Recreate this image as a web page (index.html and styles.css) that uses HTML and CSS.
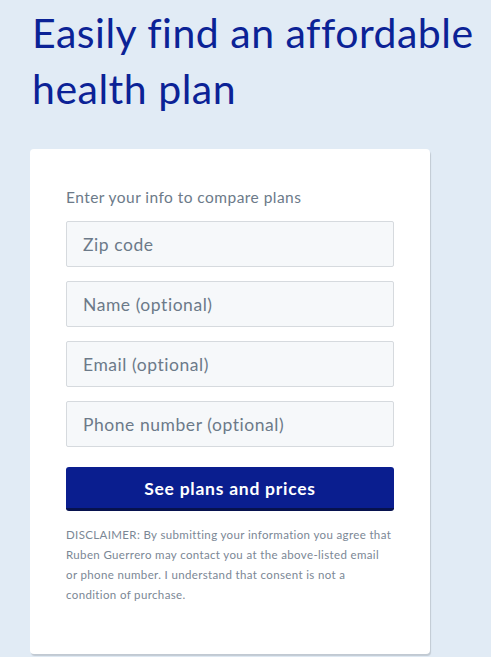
FILE: index.html
```html
<!DOCTYPE html>
<html lang="en">
<head>
<meta charset="utf-8">
<link rel="stylesheet" href="styles.css">
</head>
<body>
<main class="page">
  <h1 class="title">Easily find an affordable health plan</h1>
  <section class="card">
    <p class="intro">Enter your info to compare plans</p>
    <form class="form">
      <input class="field" type="text" placeholder="Zip code">
      <input class="field" type="text" placeholder="Name (optional)">
      <input class="field" type="text" placeholder="Email (optional)">
      <input class="field" type="text" placeholder="Phone number (optional)">
      <button class="submit" type="button">See plans and prices</button>
    </form>
    <p class="disclaimer">DISCLAIMER: By submitting your information you agree that Ruben Guerrero may contact you at the above-listed email or phone number. I understand that consent is not a condition of purchase.</p>
  </section>
</main>
</body>
</html>
```

FILE: styles.css
```css
* { box-sizing: border-box; }
html, body { margin: 0; padding: 0; }
body {
  background: #e1ebf5;
  font-family: "Lato", "Open Sans", sans-serif;
  width: 491px;
  height: 657px;
  overflow: hidden;
}
.page {
  padding: 5px 0 0 30px;
}
.title {
  margin: 0 0 0 2px;
  font-weight: 400;
  font-size: 41px;
  line-height: 56px;
  color: #0b2296;
  width: 455px;
  letter-spacing: 0.5px;
}
.card {
  margin-top: 32px;
  width: 400px;
  height: 505px;
  background: #fff;
  border-radius: 4px;
  box-shadow: 1px 2px 1px rgba(0,0,0,0.14);
  padding: 38px 36px 0 36px;
}
.intro {
  margin: 0 0 14px 0;
  font-size: 15.5px;
  line-height: 20px;
  letter-spacing: 0.45px;
  color: #6c7a89;
}
.form {
  display: flex;
  flex-direction: column;
  gap: 14px;
}
.field {
  width: 328px;
  height: 46px;
  background: #f6f8fa;
  border: 1px solid #d6dade;
  border-radius: 2px;
  padding: 0 16px;
  font-family: inherit;
  font-size: 17.5px;
  letter-spacing: 0.55px;
  color: #6c7a89;
  outline: none;
}
.field::placeholder { color: #6c7a89; }
.submit {
  margin-top: 6px;
  width: 328px;
  height: 44px;
  background: #0a1e8f;
  border: none;
  border-bottom: 3px solid #07124e;
  border-radius: 3px;
  color: #fff;
  font-family: inherit;
  font-weight: 700;
  font-size: 17.5px;
  letter-spacing: 0.75px;
  padding: 1px 0 0 0;
}
.disclaimer {
  margin: 14px 0 0 0;
  max-width: 326px;
  font-size: 11.5px;
  line-height: 20px;
  letter-spacing: 0.36px;
  color: #7b8795;
}
```
